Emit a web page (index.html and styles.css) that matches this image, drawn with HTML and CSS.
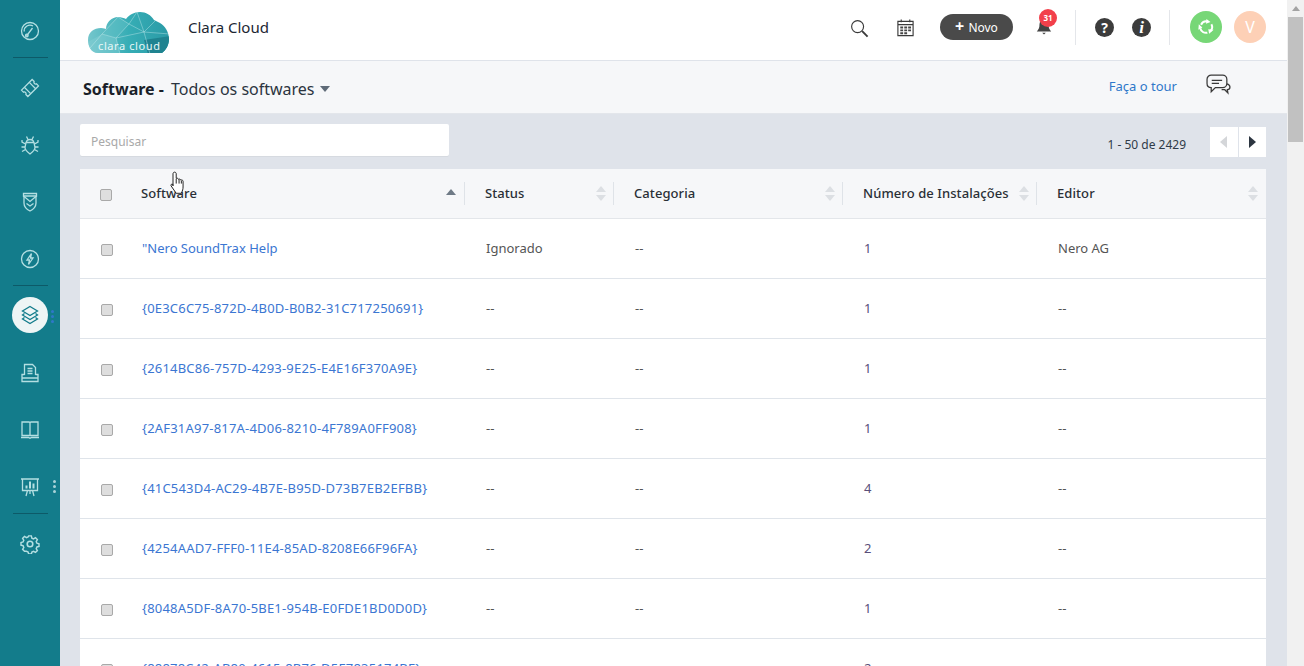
FILE: index.html
```html
<!DOCTYPE html>
<html lang="pt">
<head>
<meta charset="utf-8">
<title>Clara Cloud</title>
<link rel="stylesheet" href="styles.css">
</head>
<body>
<div class="app">
  <nav class="rail">
    <a class="rail-item sep"><svg viewBox="0 0 20 20" class="ri"><circle cx="10" cy="10" r="8.500"/><path d="M6.500 15 12.500 7M4.200 10.500A5.800 5.800 0 0 1 13 5"/><circle cx="6.800" cy="14.500" r="1.300"/></svg></a>
    <a class="rail-item"><svg viewBox="0 0 20 20" class="ri"><g transform="rotate(-45 10 10)"><path d="M2.500 5.500h15v2.800a1.800 1.800 0 0 0 0 3.400v2.800h-15v-2.800a1.800 1.800 0 0 0 0-3.400z"/><path d="M6.500 5.500v9M13.500 5.500v9"/></g></svg></a>
    <a class="rail-item"><svg viewBox="0 0 20 20" class="ri"><path d="M6 7.500h8l1 5c0 2.500-3 5-5 6.500-2-1.500-5-4-5-6.500z"/><path d="M6.500 7.500a3.500 3 0 0 1 7 0M6.500 1.500 8 4.500M13.500 1.500 12 4.500M5.500 9 2 7V5M14.500 9 18 7V5M5 12H1.500M15 12h3.500M5.500 14.500 2 16.500M14.500 14.500 18 16.500"/></svg></a>
    <a class="rail-item"><svg viewBox="0 0 20 20" class="ri"><path d="M3.500 1.500h13v2.500H3.500zM4 4v7c0 3.500 3 6.500 6 8 3-1.500 6-4.500 6-8V4"/><path d="M3.500 4 10 9.500 16.500 4M6.500 11.500 10 14l3.500-2.500"/></svg></a>
    <a class="rail-item sep"><svg viewBox="0 0 20 20" class="ri"><circle cx="10" cy="10" r="8.500"/><path d="M11.500 4.500 7 11h2.500l-1 4.500L13 9h-2.500z"/></svg></a>
    <a class="rail-item active"><span class="rail-disc"><svg viewBox="0 0 20 20" class="ri"><path d="M10 1.500 17.500 6 10 10.500 2.500 6z"/><path d="M4.500 8.500 2.500 10 10 14.500 17.500 10l-2-1.500M4.500 12.500 2.500 14 10 18.500 17.500 14l-2-1.500"/></svg></span><span class="dots dots-blue"><i></i><i></i><i></i></span></a>
    <a class="rail-item"><svg viewBox="0 0 20 20" class="ri"><path d="M4.500 12V1.500h8L15.500 4.500V12M7.500 5.500h5M7.500 8h5M7.500 10.500h5"/><path d="M4.500 11.500H2v7h16v-7h-2.500M2 15h16"/></svg></a>
    <a class="rail-item"><svg viewBox="0 0 20 20" class="ri"><path d="M2 2h7c.6 0 1 .4 1 1v12.500H2zM18 2h-7c-.6 0-1 .4-1 1v12.500h8zM1 17.500h7.500l1.500.8 1.500-.8H19"/></svg></a>
    <a class="rail-item sep"><svg viewBox="0 0 20 20" class="ri"><path d="M1 2h18M2.500 2v11.500h15V2M7.500 13.500 6 19M12.500 13.500 14 19M10 13.500V17"/><path d="M6.500 11.500V8.500M10 11.500V4.500M13.500 11.500V6.500" class="thick"/></svg><span class="dots dots-grey"><i></i><i></i><i></i></span></a>
    <a class="rail-item"><svg viewBox="0 0 20 20" class="ri gear"><path d="M8.500 1h3l.6 2.500 1.800.8 2.200-1.300 2.100 2.100-1.300 2.200.8 1.800 2.300.6v3l-2.300.6-.8 1.800 1.300 2.200-2.100 2.100-2.200-1.300-1.800.8-.6 2.300h-3l-.6-2.300-1.800-.8L3.900 18 1.800 15.900l1.300-2.200-.8-1.800L0 11.300v-3l2.300-.6.8-1.800L1.800 3.700 3.900 1.600l2.200 1.300 1.800-.8z" transform="translate(1 1) scale(.9)"/><circle cx="10" cy="10" r="2.800"/></svg></a>
  </nav>

  <div class="main">
    <header class="topbar">
      <div class="logo">
        <svg viewBox="0 0 82 42" class="logo-cloud">
          <defs>
            <linearGradient id="cg" x1="0" y1="0" x2="1" y2="0"><stop offset="0" stop-color="#74c6cc"/><stop offset=".5" stop-color="#36adb5"/><stop offset="1" stop-color="#2a9aa6"/></linearGradient>
            <clipPath id="cc"><path d="M10 41C3 41 0 34 0 28 0 20 6 16 13 16c3 0 4 1 5 1C18 10 24 5 30 5c3 0 6 1 8 2 3-4 8-7 14-7 6 0 11 3 14 8 2 1 4 2 6 3 5 3 9 9 9 16 0 6-3 11-7 14z"/></clipPath>
          </defs>
          <g clip-path="url(#cc)">
            <rect width="82" height="42" fill="url(#cg)"/>
            <path d="M56 28 82 24V42H60z" fill="#1f8390"/>
            <path d="M0 42V30L14 22 28 26 32 42z" fill="#8ad3d8" opacity=".4"/>
            <path d="M30 5 41 12 28 26 14 22z" fill="#5fc0c6" opacity=".5"/>
            <path d="M14 22 28 26 41 12 56 20M28 26 32 42M56 20 68 8M56 20 49 0M41 12 30 5M56 20 82 22M56 20 62 42M14 22 2 36M28 26 56 20M41 12 49 0M14 22 30 5" class="logo-lines"/>
          </g>
        </svg>
        <span class="logo-word">clara cloud</span>
      </div>
      <span class="brand">Clara Cloud</span>
      <div class="top-actions">
        <svg viewBox="0 0 20 20" class="top-ico low"><circle cx="8" cy="8" r="6.300" class="line"/><path d="m12.800 12.800 5.700 5.700" class="line heavy"/></svg>
        <svg viewBox="0 0 20 20" class="top-ico cal"><path d="M2 3.500h16v15H2zM2 7h16M5.500 1.500v3M14.500 1.500v3" class="line"/><path d="M4.500 9h3v2h-3zM8.700 9h3v2h-3zM12.800 9h3v2h-3zM4.500 12h3v2h-3zM8.700 12h3v2h-3zM12.800 12h3v2h-3zM4.500 15h3v2h-3zM8.700 15h3v2h-3z" class="fill"/></svg>
        <button class="novo"><b>+</b> Novo</button>
        <span class="bell">
          <svg viewBox="0 0 20 20" class="bell-ico"><path d="M10 2a5 5 0 0 1 5 5c0 4 1 6 3 8H2c2-2 3-4 3-8a5 5 0 0 1 5-5zM8 16.500h4l-2 1.800z" class="fill"/></svg>
          <span class="badge">31</span>
        </span>
        <span class="vr"></span>
        <span class="round-ico">?</span>
        <span class="round-ico serif">i</span>
        <span class="vr tight"></span>
        <span class="avatar green"><svg viewBox="0 0 20 20"><path d="M4.500 7.500A6.500 6.500 0 0 1 12 3.800M16 7a6.500 6.500 0 0 1-1 7.500M11.500 16.300A6.500 6.500 0 0 1 3.600 11.500" fill="none" stroke="#fff" stroke-width="2.200"/><path d="M10.500 1 15 4.500 10 6.500zM18.500 13l-5 4.500-1-5zM1.500 13 2 7l4 3.500z" fill="#fff"/></svg></span>
        <span class="avatar peach">V</span>
      </div>
    </header>

    <section class="subbar">
      <h1 class="crumb"><b>Software -</b> <span class="crumb-sub">Todos os softwares</span></h1>
      <span class="caret"></span>
      <a class="tour">Faça o tour</a>
      <svg viewBox="0 0 24 21" class="chat"><path d="M5 1h11c2 0 4 1.500 4 4v4c0 2.500-2 4-4 4H9l-4 4v-4c-2.500 0-4-1.500-4-4V5c0-2.500 2-4 4-4zM5.500 6h10M5.500 9h7" class="line"/><path d="M20 9.500c2 .5 3 1.500 3 3 0 1.500-1 2.500-2.500 2.500l.5 3-3-3h-3" class="line"/></svg>
    </section>

    <section class="content">
      <div class="tools">
        <input class="search" type="text" placeholder="Pesquisar">
        <span class="count">1 - 50 de 2429</span>
        <div class="pager">
          <span class="pg"><i class="tri-l"></i></span>
          <span class="pg"><i class="tri-r"></i></span>
        </div>
      </div>

      <div class="table">
        <div class="row head">
          <div class="cell c0"><input type="checkbox" class="check"></div>
          <div class="cell c1">Software<span class="sort asc"></span></div>
          <div class="cell">Status<span class="sort"></span></div>
          <div class="cell">Categoria<span class="sort"></span></div>
          <div class="cell c4">Número de Instalações<span class="sort"></span></div>
          <div class="cell">Editor<span class="sort"></span></div>
        </div>
        <div class="row"><div class="cell c0"><input type="checkbox" class="check"></div><div class="cell c1"><a>"Nero SoundTrax Help</a></div><div class="cell">Ignorado</div><div class="cell">--</div><div class="cell num">1</div><div class="cell">Nero AG</div></div>
        <div class="row"><div class="cell c0"><input type="checkbox" class="check"></div><div class="cell c1"><a class="guid">{0E3C6C75-872D-4B0D-B0B2-31C717250691}</a></div><div class="cell">--</div><div class="cell">--</div><div class="cell num">1</div><div class="cell">--</div></div>
        <div class="row"><div class="cell c0"><input type="checkbox" class="check"></div><div class="cell c1"><a class="guid">{2614BC86-757D-4293-9E25-E4E16F370A9E}</a></div><div class="cell">--</div><div class="cell">--</div><div class="cell num">1</div><div class="cell">--</div></div>
        <div class="row"><div class="cell c0"><input type="checkbox" class="check"></div><div class="cell c1"><a class="guid">{2AF31A97-817A-4D06-8210-4F789A0FF908}</a></div><div class="cell">--</div><div class="cell">--</div><div class="cell num">1</div><div class="cell">--</div></div>
        <div class="row"><div class="cell c0"><input type="checkbox" class="check"></div><div class="cell c1"><a class="guid">{41C543D4-AC29-4B7E-B95D-D73B7EB2EFBB}</a></div><div class="cell">--</div><div class="cell">--</div><div class="cell num">4</div><div class="cell">--</div></div>
        <div class="row"><div class="cell c0"><input type="checkbox" class="check"></div><div class="cell c1"><a class="guid">{4254AAD7-FFF0-11E4-85AD-8208E66F96FA}</a></div><div class="cell">--</div><div class="cell">--</div><div class="cell num">2</div><div class="cell">--</div></div>
        <div class="row"><div class="cell c0"><input type="checkbox" class="check"></div><div class="cell c1"><a class="guid">{8048A5DF-8A70-5BE1-954B-E0FDE1BD0D0D}</a></div><div class="cell">--</div><div class="cell">--</div><div class="cell num">1</div><div class="cell">--</div></div>
        <div class="row"><div class="cell c0"><input type="checkbox" class="check"></div><div class="cell c1"><a class="guid">{88878C42-AB80-4615-8B76-D5E7835174BE}</a></div><div class="cell">--</div><div class="cell">--</div><div class="cell num">2</div><div class="cell">--</div></div>
      </div>
    </section>
  </div>

  <div class="scrollbar"><span class="sb-up"></span><span class="sb-thumb"></span></div>

  <svg viewBox="0 0 16 21" class="cursor"><path d="M4.500 1c1 0 1.500.7 1.500 1.500V6.500c1-.5 1.800 0 2 .8.800-.5 1.800-.2 2 .7.800-.4 2 0 2 1V14c0 2-.5 3-1.500 5.500H6L1.500 13c-.5-1 .5-2 1.500-1.300L3.200 13V2.500C3.200 1.700 3.700 1 4.500 1zM6 7v4M8.500 7.500V11M10.500 8.500V11" fill="#fff" stroke="#111" stroke-width=".8"/></svg>
</div>
</body>
</html>
```
FILE: styles.css
```css
* { box-sizing: border-box; }
html, body { margin: 0; height: 100%; overflow: hidden; }
body { font-family: "Noto Sans", "Open Sans", sans-serif; font-size: 13px; color: #222; background: #dfe3ea; }
.app { display: flex; width: 1304px; height: 666px; overflow: hidden; position: relative; }

/* left rail */
.rail { flex: 0 0 60px; background: #137c8b; padding-top: 2px; display: flex; flex-direction: column; }
.rail-item { flex: 0 0 57px; display: flex; align-items: center; justify-content: center; position: relative; }
.rail-item.sep::after { content: ""; position: absolute; left: 13px; width: 35px; bottom: 1px; height: 1px; background: #0d5a68; }
.ri { width: 20px; height: 20px; fill: none; stroke: #b4dfe2; stroke-width: 1.300; }
.ri .thick { stroke-width: 2; }
.rail-disc { width: 36px; height: 36px; border-radius: 50%; background: #eef5f5; display: flex; align-items: center; justify-content: center; margin-top: -1px; }
.rail-disc .ri { stroke: #137c8b; }
.gear { stroke-width: 1.600; }
.dots { position: absolute; left: 51px; top: 50%; margin-top: -6px; display: flex; flex-direction: column; gap: 2px; }
.dots i { display: block; width: 3px; height: 3px; border-radius: 50%; background: #2f78c8; }
.dots-grey { left: 53px; margin-top: -7px; }
.dots-grey i { background: #a9d3d8; }

/* main column */
.main { flex: 0 0 1227px; display: flex; flex-direction: column; min-width: 0; }
.topbar { height: 61px; flex: none; background: #fff; border-bottom: 1px solid #dfe3ea; display: flex; align-items: center; padding: 0 21px 6px 28px; }
.logo { width: 82px; height: 42px; position: relative; margin-top: 12px; flex: none; }
.logo-cloud { display: block; width: 82px; height: 42px; }
.logo-lines { fill: none; stroke: #c8ecee; stroke-width: .6; opacity: .7; }
.logo-word { position: absolute; left: 10px; bottom: 1px; color: #e8f7f7; font-size: 11px; letter-spacing: .6px; line-height: 14px; white-space: nowrap; }
.brand { margin-left: 18px; font-size: 15px; color: #1c2733; }
.top-actions { margin-left: auto; display: flex; align-items: center; }
.top-ico { width: 19px; height: 19px; }
.low { margin-top: 2px; }
.line { fill: none; stroke: #3a3a3a; stroke-width: 1.200; }
.heavy { stroke-width: 2; }
.fill { fill: #444; }
.cal { margin-left: 27px; margin-top: 1px; }
.novo { margin-left: 25px; width: 73px; height: 26px; border: 0; border-radius: 13px; background: #4a4a4a; color: #fff; font: 12px "Noto Sans", sans-serif; padding: 0; }
.novo b { font-size: 16px; line-height: 12px; margin-right: 1px; }
.bell { position: relative; width: 20px; height: 20px; margin-left: 22px; }
.bell-ico { display: block; width: 18px; height: 20px; }
.badge { position: absolute; left: 4px; top: -8px; width: 18px; height: 18px; border-radius: 50%; background: #f2404b; color: #fff; font-size: 8px; font-weight: 700; line-height: 18px; text-align: center; }
.vr { width: 1px; height: 35px; background: #e4e6ea; margin-left: 20px; }
.vr.tight { margin-left: 18px; }
.round-ico { width: 19px; height: 19px; border-radius: 50%; background: #3c3c3c; color: #fff; font-size: 14px; font-weight: 700; line-height: 19px; text-align: center; margin-left: 19px; margin-top: 1px; }
.round-ico + .round-ico { margin-left: 18px; }
.serif { font-family: "Liberation Serif", serif; font-size: 17px; font-style: italic; }
.avatar { width: 32px; height: 32px; border-radius: 50%; display: flex; align-items: center; justify-content: center; margin-left: 12px; }
.vr + .avatar { margin-left: 20px; }
.avatar svg { width: 18px; height: 18px; }
.green { background: #77d777; }
.peach { background: #fdd0b6; color: #fff; font-size: 16px; }

/* sub bar */
.subbar { height: 53px; flex: none; background: #f6f7f9; border-bottom: 1px solid #e3e6eb; display: flex; align-items: center; padding: 4px 56px 0 23px; }
.crumb { margin: 0; font-size: 16px; font-weight: 400; color: #2b3440; }
.crumb b { color: #1a1f29; }
.crumb-sub { margin-left: 3px; }
.caret { margin-left: 5px; border-style: solid; border-width: 6px 5.500px 0; border-color: #5f6b78 transparent transparent; }
.tour { margin-left: auto; margin-top: -6px; color: #2f77c9; font-size: 13px; }
.chat { width: 25px; height: 22px; margin-left: 29px; margin-top: -8px; }

/* content */
.content { flex: 1; min-height: 0; padding: 10px 21px 0 20px; }
.tools { display: flex; align-items: flex-start; height: 45px; }
.search { width: 369px; height: 32px; border: 0; border-radius: 2px; background: #fff; padding: 2px 11px 0; font: 12px "Noto Sans", sans-serif; outline: 0; box-shadow: 0 1px 0 #d6dae0; }
.search::placeholder { color: #a9a9a9; opacity: 1; }
.count { margin-left: auto; margin-top: 13px; font-size: 12px; line-height: 16px; color: #2f3b48; }
.pager { margin-left: 24px; margin-top: 3px; display: flex; gap: 1px; background: #dfe3ea; }
.pg { width: 27.500px; height: 30px; background: #fff; display: flex; align-items: center; justify-content: center; }
.tri-l, .tri-r { border-style: solid; border-width: 6px 0; border-color: transparent; }
.tri-l { border-right: 7px solid #d4d6d9; }
.tri-r { border-left: 7px solid #2c3540; }

/* table */
.table { background: #fff; }
.row { display: grid; grid-template-columns: 61px 324px 149px 229px 194px 229px; height: 60px; align-items: center; border-bottom: 1px solid #dfe4ea; color: #555; font-size: 13px; padding-bottom: 1px; }
.row.head { height: 50px; background: #f6f7f9; border-bottom: 1px solid #e3e6ea; color: #2a2f36; padding: 0 0 1px; font-weight: 500; letter-spacing: .08px; }
.cell { padding-left: 21px; position: relative; white-space: nowrap; }
.head .cell { padding-left: 20px; display: flex; align-items: center; height: 23px; }
.head .cell + .cell + .cell::before { content: ""; position: absolute; left: -1px; top: 0; bottom: 0; width: 1px; background: #dfe3e8; }
.c0, .head .c0 { padding-left: 21px; }
.head .c0 { padding-left: 20px; }
.head .c1 { padding-left: 0; }
.c1 { padding-left: 1px; }
.c1 a { color: #3b76d2; }
.c1 a.guid { letter-spacing: .2px; }
.num { color: #5a4f7a; }
.check { appearance: none; -webkit-appearance: none; display: block; margin: 4px 0 0; width: 12px; height: 12px; border: 1px solid #a9a9a9; border-radius: 2px; background: #dedede; }
.head .check { margin: 3px 0 0; }
.sort { position: absolute; right: 8px; top: 4px; width: 10px; height: 15px; }
.sort::before, .sort::after { content: ""; position: absolute; left: 0; border-style: solid; border-color: transparent; border-width: 0 5px; }
.sort::before { top: 0; border-bottom: 6px solid #dcdfe3; }
.sort::after { bottom: 0; border-top: 6px solid #dcdfe3; }
.sort.asc { right: 9px; }
.sort.asc::before { border-bottom-color: #6f7a86; top: 3px; }
.sort.asc::after { display: none; }

/* overlay bits */
.scrollbar { flex: 0 0 17px; background: #f1f1f1; position: relative; display: flex; flex-direction: column; align-items: center; }
.sb-up { margin-top: 6px; border-style: solid; border-width: 0 4px 5px; border-color: transparent transparent #a3a3a3; }
.sb-thumb { margin-top: 6px; width: 15px; height: 125px; background: #c1c1c1; }
.cursor { position: absolute; left: 169px; top: 171px; width: 19px; height: 24px; }
```
